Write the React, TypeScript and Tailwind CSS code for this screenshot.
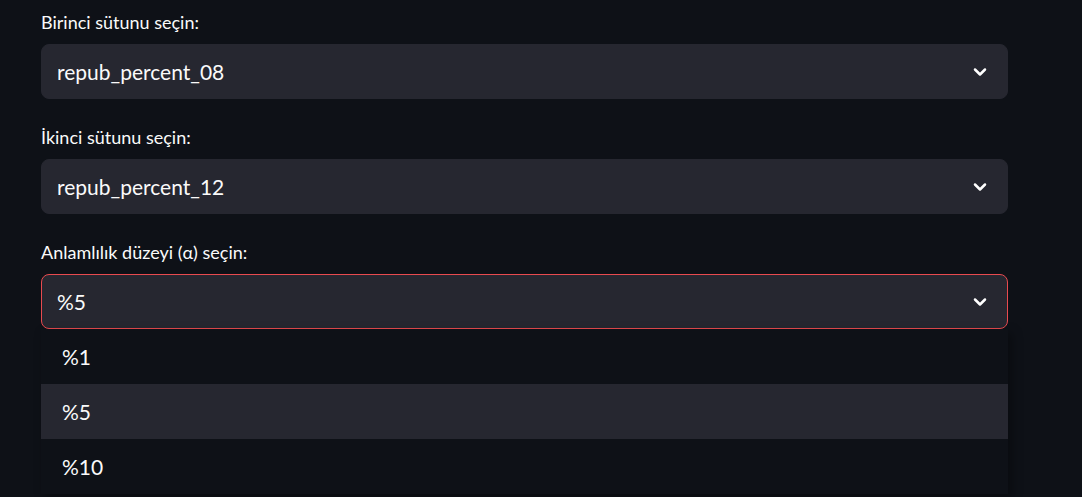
import { ChevronDown } from "lucide-react";

const font = { fontFamily: "Lato, 'Noto Sans', sans-serif" };

function Select({ label, value, open }: { label: string; value: string; open?: boolean }) {
  return (
    <div className="flex flex-col">
      <div className="h-[44px] flex items-center text-[18px] text-[#fafafa] pt-[1px]">{label}</div>
      <div
        className={`h-[55px] rounded-[8px] bg-[#262730] flex items-center justify-between pl-[15px] pr-[17px] border ${
          open ? "border-[#e84a4f]" : "border-[#262730]"
        }`}
      >
        <span className="text-[21px] text-[#fafafa]">{value}</span>
        <ChevronDown className="w-[20px] h-[20px] text-white" strokeWidth={3} />
      </div>
    </div>
  );
}

export default function App() {
  const options = ["%1", "%5", "%10"];
  return (
    <div className="w-[1082px] h-[497px] bg-[#0e1117] overflow-hidden" style={font}>
      <div className="w-[967px] ml-[41px] flex flex-col gap-[16px]">
        <Select label="Birinci sütunu seçin:" value="repub_percent_08" />
        <Select label="İkinci sütunu seçin:" value="repub_percent_12" />
        <div className="relative">
          <Select label="Anlamlılık düzeyi (α) seçin:" value="%5" open />
          <div className="absolute top-[100%] left-0 w-[967px] bg-[#0e1117] shadow-[4px_4px_10px_rgba(0,0,0,0.35)]">
            {options.map((o) => (
              <div
                key={o}
                className={`h-[55px] flex items-center pl-[21px] text-[21px] text-[#fafafa] ${
                  o === "%5" ? "bg-[#262730]" : ""
                }`}
              >
                {o}
              </div>
            ))}
          </div>
        </div>
      </div>
    </div>
  );
}
